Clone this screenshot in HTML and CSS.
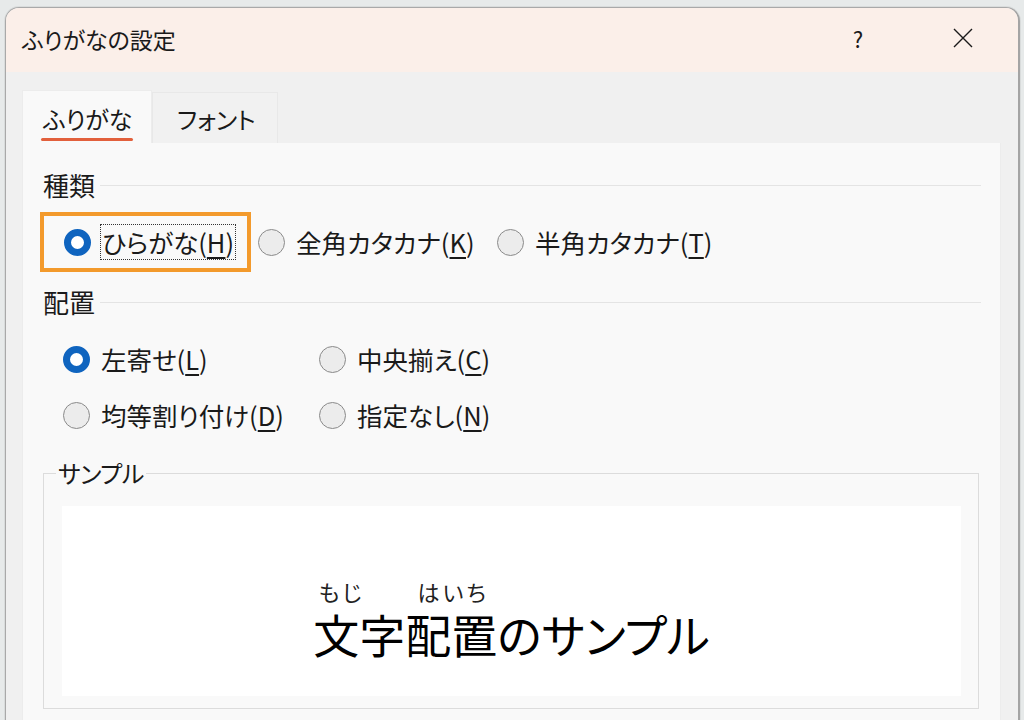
FILE: index.html
```html
<!DOCTYPE html>
<html lang="ja">
<head>
    <meta charset="UTF-8">
    <title>ふりがなの設定</title>
    <link rel="stylesheet" href="styles.css">
</head>
<body>
    <div class="window">
        <div class="titlebar">
            <span class="title">ふりがなの設定</span>
            <span class="tb-btn help">?</span>
            <span class="tb-btn close">
                <svg width="20" height="20" viewBox="0 0 20 20"><path d="M1 1 L19 19 M19 1 L1 19" stroke="#1a1a1a" stroke-width="1.4" fill="none"/></svg>
            </span>
        </div>

        <div class="dialog-body">
            <div class="tabs">
                <div class="tab active"><span>ふりがな</span></div>
                <div class="tab"><span>フォント</span></div>
            </div>

            <div class="panel">
                <div class="section-head"><span>種類</span><div class="rule"></div></div>
                <div class="row row-kind">
                    <div class="focus-ring">
                        <label class="radio checked"><i></i><span class="focus-text">ひらがな(<u>H</u>)</span></label>
                    </div>
                    <label class="radio kind2"><i></i><span>全角カタカナ(<u>K</u>)</span></label>
                    <label class="radio"><i></i><span>半角カタカナ(<u>T</u>)</span></label>
                </div>

                <div class="section-head head2"><span>配置</span><div class="rule"></div></div>
                <div class="align-grid">
                    <label class="radio checked"><i></i><span>左寄せ(<u>L</u>)</span></label>
                    <label class="radio"><i></i><span>中央揃え(<u>C</u>)</span></label>
                    <label class="radio"><i></i><span>均等割り付け(<u>D</u>)</span></label>
                    <label class="radio"><i></i><span>指定なし(<u>N</u>)</span></label>
                </div>

                <fieldset class="sample">
                    <legend>サンプル</legend>
                    <div class="sample-box">
                        <div class="ruby-line"><span class="rt rt1">もじ</span><span class="rt rt2">はいち</span></div>
                        <div class="sample-text">文字配置のサンプル</div>
                    </div>
                </fieldset>
            </div>
        </div>
    </div>
</body>
</html>
```

FILE: styles.css
```css
body {
    margin: 0;
    background-color: #e7eaea;
    font-family: "Noto Sans CJK JP", sans-serif;
    font-feature-settings: "palt";
    color: #1a1a1a;
    overflow: hidden;
}
.window {
    margin: 7px 0 0 5px;
    width: 1012px;
    height: 760px;
    border: 1px solid #a9a9a9;
    border-right: 2px solid #a4a4a4;
    border-bottom: none;
    border-radius: 14px 14px 0 0;
    overflow: hidden;
    background-color: #f0f0f0;
    box-shadow: 0 0 0 1px rgba(0, 0, 0, 0.06);
}
.titlebar {
    height: 64px;
    background-color: #fbefe9;
    display: flex;
    align-items: center;
}
.title {
    font-size: 23px;
    padding-left: 16px;
    flex: 1;
    margin-top: -2px;
}
.tb-btn {
    display: flex;
    align-items: center;
    justify-content: center;
    height: 64px;
}
.help {
    width: 100px;
    font-size: 22px;
    margin-top: -4px;
}
.close {
    width: 110px;
    margin-top: -4px;
}
.dialog-body {
    padding: 18px 17px 0 16px;
}
.tabs {
    display: flex;
    align-items: flex-end;
    height: 53px;
}
.tab {
    height: 51px;
    width: 126px;
    box-sizing: border-box;
    background-color: #f1f1f1;
    border: 1px solid #e8e8e8;
    border-bottom: none;
    font-size: 24px;
    padding-left: 24px;
    line-height: 52px;
}
.tab.active {
    height: 53px;
    width: 130px;
    background-color: #f9f9f9;
    border-color: #ececec;
    padding-left: 20px;
    line-height: 56px;
}
.tab.active span {
    position: relative;
}
.tab.active span::after {
    content: "";
    position: absolute;
    left: -2px;
    right: -1px;
    bottom: -5px;
    height: 3px;
    border-radius: 2px;
    background-color: #e2603c;
}
.panel {
    background-color: #f9f9f9;
    border: 1px solid #ececec;
    border-top: none;
    padding: 25px 19px 0 20px;
    height: 700px;
}
.section-head {
    display: flex;
    align-items: center;
    font-size: 26px;
    line-height: 34px;
}
.section-head .rule {
    flex: 1;
    height: 1px;
    background-color: #e4e4e4;
    margin-left: 5px;
}
.head2 {
    margin-top: 13px;
}
.radio {
    display: flex;
    align-items: center;
    font-size: 25.5px;
    line-height: 34px;
}
.radio i {
    width: 27px;
    height: 27px;
    box-sizing: border-box;
    border-radius: 50%;
    border: 1.5px solid #8a8a8a;
    background-color: #ececec;
    margin-right: 11px;
    flex: none;
}
.radio.checked i {
    border: 7.5px solid #0f64bf;
    background-color: #ffffff;
}
.radio u {
    text-underline-offset: 4px;
    text-decoration-thickness: 1.5px;
}
.row-kind {
    display: flex;
    align-items: center;
    margin-top: 10px;
    margin-left: -3px;
}
.focus-ring {
    width: 211px;
    height: 60px;
    box-sizing: border-box;
    border: 4px solid #f39a2c;
    display: flex;
    align-items: center;
    padding-left: 20px;
    margin-right: 7px;
}
.focus-text {
    border: 1px dotted #333;
    padding: 0 1px;
    margin-left: -2px;
}
.kind2 {
    width: 239px;
}
.align-grid {
    display: grid;
    grid-template-columns: 256px auto;
    grid-auto-rows: 44px;
    row-gap: 12px;
    margin-top: 18px;
    padding-left: 20px;
}
.sample {
    margin: 19px 2px 0 0;
    border: 1px solid #dcdcdc;
    padding: 16px 17px 12px 18px;
}
.sample legend {
    font-size: 24px;
    line-height: 34px;
    padding: 0 2px;
    margin-left: -6px;
    letter-spacing: -0.5px;
}
.sample-box {
    background-color: #ffffff;
    height: 190px;
    box-sizing: border-box;
    padding-top: 72px;
    display: flex;
    flex-direction: column;
    align-items: center;
}
.ruby-line {
    width: 394px;
    display: flex;
    height: 26px;
    margin-left: 2px;
}
.rt {
    font-size: 22px;
    line-height: 26px;
    letter-spacing: 3px;
    color: #222;
}
.rt1 {
    padding-left: 3px;
    width: 99px;
}
.sample-text {
    font-size: 46px;
    line-height: 54px;
    color: #000;
    margin-top: 2px;
}
```
